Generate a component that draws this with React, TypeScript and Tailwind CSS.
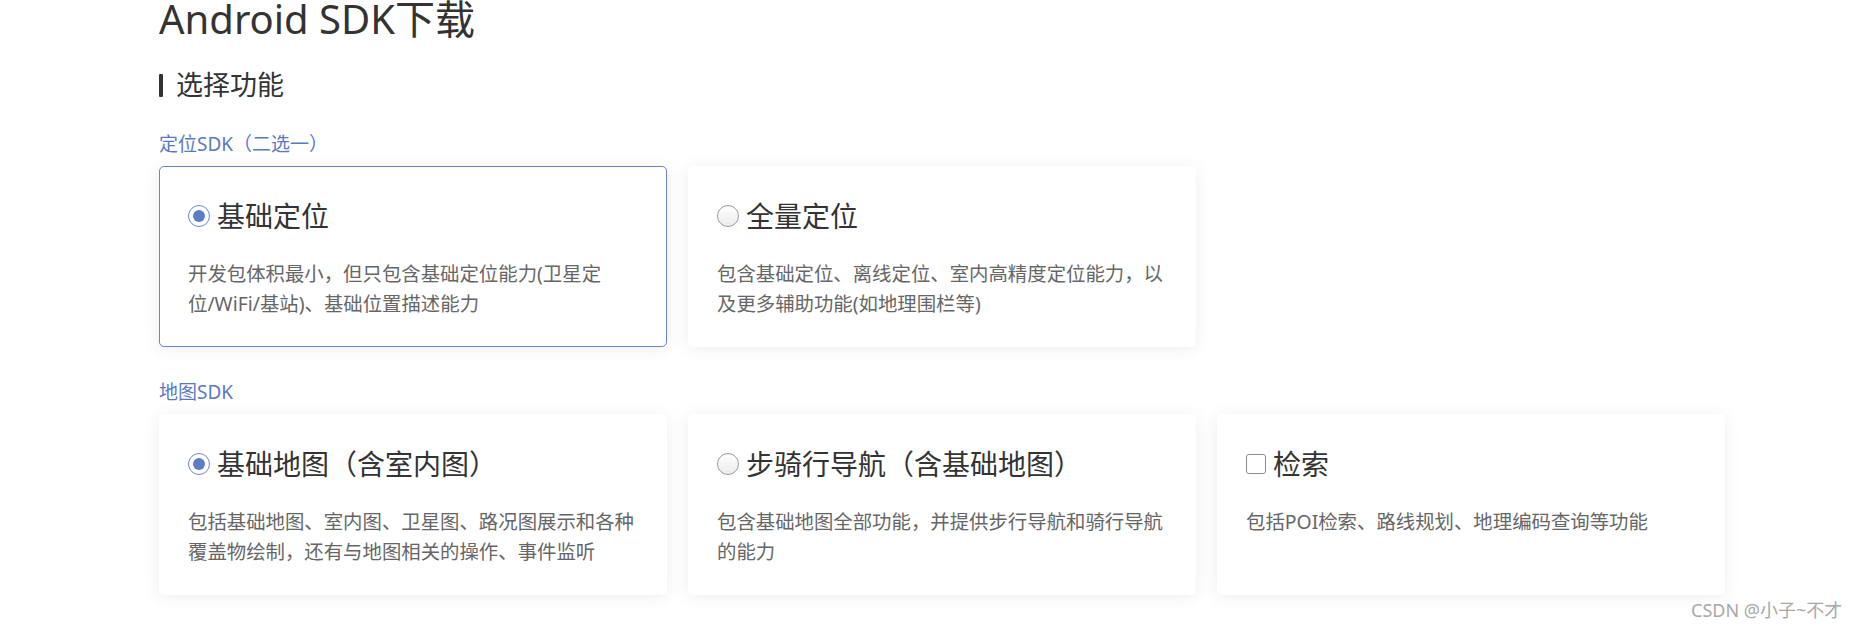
import React from "react";

type Kind = "radio-on" | "radio-off" | "check";

interface Option {
  title: string;
  desc: string[];
  kind: Kind;
  selected?: boolean;
}

const LOCATION: Option[] = [
  {
    title: "基础定位",
    desc: ["开发包体积最小，但只包含基础定位能力(卫星定", "位/WiFi/基站)、基础位置描述能力"],
    kind: "radio-on",
    selected: true,
  },
  {
    title: "全量定位",
    desc: ["包含基础定位、离线定位、室内高精度定位能力，以", "及更多辅助功能(如地理围栏等)"],
    kind: "radio-off",
  },
];

const MAP: Option[] = [
  {
    title: "基础地图（含室内图）",
    desc: ["包括基础地图、室内图、卫星图、路况图展示和各种", "覆盖物绘制，还有与地图相关的操作、事件监听"],
    kind: "radio-on",
  },
  {
    title: "步骑行导航（含基础地图）",
    desc: ["包含基础地图全部功能，并提供步行导航和骑行导航", "的能力"],
    kind: "radio-off",
  },
  {
    title: "检索",
    desc: ["包括POI检索、路线规划、地理编码查询等功能"],
    kind: "check",
  },
];

function Marker({ kind }: { kind: Kind }) {
  if (kind === "radio-on") {
    return (
      <span className="flex h-[22px] w-[22px] shrink-0 items-center justify-center rounded-full border-[1.5px] border-[#7189cd] bg-white">
        <span className="h-[12px] w-[12px] rounded-full bg-[#5f7dc6]" />
      </span>
    );
  }
  if (kind === "radio-off") {
    return (
      <span className="h-[22px] w-[22px] shrink-0 rounded-full border-[1.5px] border-[#9c9c9c] bg-linear-to-b from-white to-[#ebebeb]" />
    );
  }
  return (
    <span className="h-[20px] w-[20px] shrink-0 rounded-[3px] border-[1.5px] border-[#8c8c8c] bg-white" />
  );
}

function Card({ option }: { option: Option }) {
  return (
    <div
      className={`rounded-[5px] border bg-white pt-[31px] pb-[27px] pl-[28px] pr-[20px] shadow-[0_2px_18px_rgba(0,0,0,0.07)] ${
        option.selected ? "border-[#6c84c8]" : "border-transparent"
      }`}
    >
      <div className="flex h-[36px] items-center gap-[7px]">
        <Marker kind={option.kind} />
        <span className="text-[28px] leading-[36px] text-[#333]">{option.title}</span>
      </div>
      <div className="mt-[25px] text-[19.4px] leading-[30px] text-[#666]">
        {option.desc.map((line) => (
          <p key={line} className="whitespace-nowrap">
            {line}
          </p>
        ))}
      </div>
    </div>
  );
}

export default function App() {
  return (
    <div
      className="relative min-h-[629px] w-full overflow-hidden bg-white"
      style={{ fontFamily: '"Noto Sans", "Noto Sans CJK SC", sans-serif' }}
    >
      <div className="ml-[159px] w-[1566px]">
        <h1 className="mt-[-1px] text-[40px] leading-[40px] font-normal text-[#333]">
          Android SDK下载
        </h1>

        {/* section header */}
        <div className="mt-[28px] flex h-[36px] items-center gap-[13px]">
          <span className="h-[23px] w-[4px] rounded-[1px] bg-[#333]" />
          <h2 className="text-[27px] leading-[36px] font-normal text-[#333]">选择功能</h2>
        </div>

        <div className="mt-[29px] text-[19px] leading-[24px] text-[#5b78c5]">定位SDK（二选一）</div>
        <div className="mt-[10px] grid grid-cols-3 gap-[21px]">
          {LOCATION.map((o) => (
            <Card key={o.title} option={o} />
          ))}
        </div>

        <div className="mt-[33px] text-[19px] leading-[24px] text-[#5b78c5]">地图SDK</div>
        <div className="mt-[10px] grid grid-cols-3 gap-[21px]">
          {MAP.map((o) => (
            <Card key={o.title} option={o} />
          ))}
        </div>
      </div>

      {/* watermark */}
      <div className="absolute left-[1691px] top-[598px] text-[18px] leading-[24px] text-[#a8a8a8]">
        CSDN @小子~不才
      </div>
    </div>
  );
}
